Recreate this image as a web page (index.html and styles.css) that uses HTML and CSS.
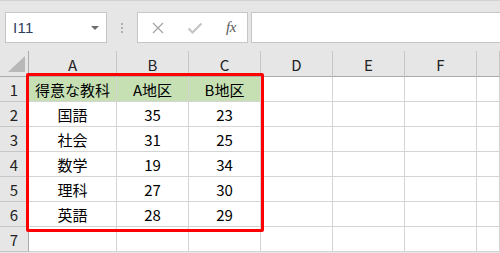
FILE: index.html
```html
<html>

<head>
  <meta charset="utf8">
  <title>Sheet</title>
  <link rel="stylesheet" href="styles.css">
</head>

<body>
  <div class="toolbar">
    <div class="namebox">
      <span class="ref">I11</span>
      <span class="caret"></span>
    </div>
    <div class="grip"><i></i><i></i><i></i></div>
    <div class="buttons">
      <svg class="btn" width="14" height="14" viewBox="0 0 14 14">
        <path d="M2 2L12 12M12 2L2 12" stroke="#a6a6a6" stroke-width="1.3" fill="none" />
      </svg>
      <svg class="btn" width="16" height="14" viewBox="0 0 16 14">
        <path d="M1.5 7.5L5.5 11.5L14.5 2.5" stroke="#c4c4c4" stroke-width="2.2" fill="none" />
      </svg>
      <span class="fx">fx</span>
    </div>
    <div class="formula"></div>
  </div>

  <div class="sheet">
    <div class="corner"><span class="tri"></span></div>
    <div class="colhead">A</div>
    <div class="colhead">B</div>
    <div class="colhead">C</div>
    <div class="colhead">D</div>
    <div class="colhead">E</div>
    <div class="colhead">F</div>
    <div class="colhead last"></div>

    <div class="rowhead">1</div>
    <div class="cell green">得意な教科</div>
    <div class="cell green">A地区</div>
    <div class="cell green">B地区</div>
    <div class="cell"></div>
    <div class="cell"></div>
    <div class="cell"></div>
    <div class="cell"></div>

    <div class="rowhead">2</div>
    <div class="cell">国語</div>
    <div class="cell">35</div>
    <div class="cell">23</div>
    <div class="cell"></div>
    <div class="cell"></div>
    <div class="cell"></div>
    <div class="cell"></div>

    <div class="rowhead">3</div>
    <div class="cell">社会</div>
    <div class="cell">31</div>
    <div class="cell">25</div>
    <div class="cell"></div>
    <div class="cell"></div>
    <div class="cell"></div>
    <div class="cell"></div>

    <div class="rowhead">4</div>
    <div class="cell">数学</div>
    <div class="cell">19</div>
    <div class="cell">34</div>
    <div class="cell"></div>
    <div class="cell"></div>
    <div class="cell"></div>
    <div class="cell"></div>

    <div class="rowhead">5</div>
    <div class="cell">理科</div>
    <div class="cell">27</div>
    <div class="cell">30</div>
    <div class="cell"></div>
    <div class="cell"></div>
    <div class="cell"></div>
    <div class="cell"></div>

    <div class="rowhead">6</div>
    <div class="cell">英語</div>
    <div class="cell">28</div>
    <div class="cell">29</div>
    <div class="cell"></div>
    <div class="cell"></div>
    <div class="cell"></div>
    <div class="cell"></div>

    <div class="rowhead">7</div>
    <div class="cell"></div>
    <div class="cell"></div>
    <div class="cell"></div>
    <div class="cell"></div>
    <div class="cell"></div>
    <div class="cell"></div>
    <div class="cell"></div>

    <div class="highlight"></div>
  </div>
</body>

</html>
```

FILE: styles.css
```css
body {
  margin: 0;
  width: 500px;
  height: 253px;
  overflow: hidden;
  background: #e6e6e6;
  font-family: "Noto Sans CJK JP", sans-serif;
  color: #000;
}

.toolbar {
  display: flex;
  align-items: center;
  height: 51px;
  border-top: 1px solid #d2d2d2;
  box-sizing: border-box;
  padding: 11px 0 8px 5px;
}

.namebox {
  box-sizing: border-box;
  width: 102px;
  height: 31px;
  background: #fff;
  border: 1px solid #c6c6c6;
  display: flex;
  align-items: center;
  justify-content: space-between;
  padding: 0 7px 0 7px;
}

.ref {
  font: 15px "Liberation Sans", sans-serif;
  color: #2c3e5a;
  letter-spacing: 0.3px;
}

.caret {
  width: 0;
  height: 0;
  border-left: 4px solid transparent;
  border-right: 4px solid transparent;
  border-top: 4px solid #6e6e6e;
}

.grip {
  width: 30px;
  display: flex;
  flex-direction: column;
  align-items: center;
  gap: 2px;
}

.grip i {
  width: 2px;
  height: 2px;
  background: #b0b0b0;
}

.buttons {
  box-sizing: border-box;
  width: 111px;
  height: 31px;
  background: #fff;
  border: 1px solid #c6c6c6;
  display: flex;
  align-items: center;
  padding-left: 13px;
}

.btn {
  margin-right: 22px;
}

.btn + .btn {
  margin-right: 23px;
}

.fx {
  font: italic 15px "Liberation Serif", serif;
  color: #595959;
  letter-spacing: -0.5px;
}

.formula {
  box-sizing: border-box;
  flex: 1;
  height: 31px;
  margin-left: 3px;
  background: #fff;
  border: 1px solid #c6c6c6;
  border-right: none;
}

.sheet {
  position: relative;
  display: grid;
  grid-template-columns: 29px 88px 72px 72px 72px 72px 72px 23px;
  grid-template-rows: 26px repeat(7, 25px);
}

.sheet > div {
  box-sizing: border-box;
  display: flex;
  align-items: center;
  justify-content: center;
  font-size: 15px;
}

.corner {
  border-right: 1px solid #ababab;
  border-bottom: 1px solid #ababab;
  align-items: flex-end !important;
  justify-content: flex-end !important;
  padding: 0 3px 4px 0;
}

.tri {
  width: 0;
  height: 0;
  border-left: 17px solid transparent;
  border-bottom: 16px solid #b8b8b8;
}

.colhead {
  background: #e6e6e6;
  color: #222;
  border-bottom: 1px solid #ababab;
  border-right: 1px solid #c6c6c6;
  background-clip: padding-box;
  position: relative;
  padding-top: 2px;
}

.colhead::after {
  content: "";
}

.rowhead {
  background: #e6e6e6;
  color: #222;
  border-right: 1px solid #ababab;
  border-bottom: 1px solid #c6c6c6;
}

.cell {
  background: #fff;
  border-right: 1px solid #d4d4d4;
  border-bottom: 1px solid #d4d4d4;
}

.green {
  background: #c6e0b4;
}

.highlight {
  position: absolute;
  left: 26px;
  top: 22px;
  width: 238px;
  height: 159px;
  border: 3px solid #ff0000;
  border-radius: 2px;
  box-sizing: border-box;
}
```
